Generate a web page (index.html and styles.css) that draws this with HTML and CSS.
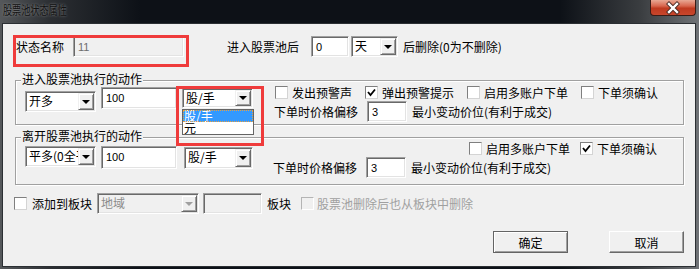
FILE: index.html
```html
<!DOCTYPE html>
<html lang="zh-CN">
<head>
    <meta charset="UTF-8">
    <title>股票池状态属性</title>
    <link rel="stylesheet" href="styles.css">
</head>
<body>
    <div class="window">
        <div class="titlebar">
            <span class="title">股票池状态属性</span>
            <span class="close">
                <svg width="44" height="14" viewBox="0 0 44 14">
                    <path d="M18 3 L26 11 M26 3 L18 11" stroke="#4a2a24" stroke-width="4.2" stroke-linecap="square"/>
                    <path d="M18 3 L26 11 M26 3 L18 11" stroke="#fff" stroke-width="2.4" stroke-linecap="square"/>
                </svg>
            </span>
        </div>

        <div class="client">
            <div class="row row-name">
                <span class="name-lbl">状态名称</span>
                <span class="edit edit-name disabled">11</span>
                <span class="enter-lbl">进入股票池后</span>
                <span class="edit edit-days">0</span>
                <span class="combo combo-days">
                    <span class="combo-text">天</span>
                    <span class="combo-btn"></span>
                </span>
                <span>后删除(0为不删除)</span>
            </div>

            <div class="group group-enter">
                <div class="group-title">进入股票池执行的动作</div>
                <div class="group-body">
                    <div class="combo combo-action">
                        <span class="combo-text">开多</span>
                        <span class="combo-btn"></span>
                    </div>
                    <div class="edit edit-qty">100</div>
                    <div class="combo combo-unit">
                        <span class="combo-text">股/手</span>
                        <span class="combo-btn"></span>
                        <div class="droplist">
                            <div class="drop-item selected">股/手</div>
                            <div class="drop-item">元</div>
                        </div>
                    </div>
                    <div class="opts">
                        <div class="opt-row checks">
                            <label class="check"><span class="cb"></span>发出预警声</label>
                            <label class="check"><span class="cb checked"><svg viewBox="0 0 11 11"><polyline points="2,5 4.5,8 9,2.5"/></svg></span>弹出预警提示</label>
                            <label class="check"><span class="cb"></span>启用多账户下单</label>
                            <label class="check"><span class="cb"></span>下单须确认</label>
                        </div>
                        <div class="opt-row offset-row">
                            <span class="offset-lbl">下单时价格偏移</span>
                            <span class="edit edit-offset">3</span>
                            <span>最小变动价位(有利于成交)</span>
                        </div>
                    </div>
                </div>
            </div>

            <div class="group group-leave">
                <div class="group-title">离开股票池执行的动作</div>
                <div class="group-body">
                    <div class="combo combo-action">
                        <span class="combo-text">平多(0全平)</span>
                        <span class="combo-btn"></span>
                    </div>
                    <div class="edit edit-qty">100</div>
                    <div class="combo combo-unit">
                        <span class="combo-text">股/手</span>
                        <span class="combo-btn"></span>
                    </div>
                    <div class="opts">
                        <div class="opt-row checks">
                            <label class="check"><span class="cb"></span>启用多账户下单</label>
                            <label class="check"><span class="cb checked"><svg viewBox="0 0 11 11"><polyline points="2,5 4.5,8 9,2.5"/></svg></span>下单须确认</label>
                        </div>
                        <div class="opt-row offset-row">
                            <span class="offset-lbl">下单时价格偏移</span>
                            <span class="edit edit-offset">3</span>
                            <span>最小变动价位(有利于成交)</span>
                        </div>
                    </div>
                </div>
            </div>

            <div class="row row-block">
                <label class="check"><span class="cb"></span>添加到板块</label>
                <span class="combo combo-block disabled">
                    <span class="combo-text">地域</span>
                    <span class="combo-btn"></span>
                </span>
                <span class="edit edit-block disabled"></span>
                <span class="block-lbl">板块</span>
                <label class="check disabled"><span class="cb"></span>股票池删除后也从板块中删除</label>
            </div>

            <div class="row row-buttons">
                <button class="btn default">确定</button>
                <button class="btn">取消</button>
            </div>

            <div class="mark mark-name"></div>
            <div class="mark mark-unit"></div>
        </div>
    </div>
</body>
</html>
```

FILE: styles.css
```css
body {
    margin: 0;
    background-color: #3b3e41;
    font-family: "Noto Sans CJK SC", sans-serif;
    font-size: 12px;
    color: #000;
    overflow: hidden;
}

.window {
    width: 699px;
    height: 269px;
    background: linear-gradient(to right, #55585b 0, #2c2f33 50px, #0d1117 140px, #0d1117 560px, #3a3d40 640px, #6f7276 699px);
}

.titlebar {
    height: 23px;
    display: flex;
    justify-content: space-between;
    align-items: flex-start;
}

.title {
    display: inline-block;
    margin: 3px 0 0 3px;
    font-size: 12px;
    line-height: 14px;
    color: #111;
    transform: scaleX(0.76);
    transform-origin: 0 0;
    text-shadow: 0 0 3px rgba(170, 170, 170, 0.8);
}

.close {
    width: 46px;
    height: 16px;
    margin-right: 3px;
    box-sizing: border-box;
    border: 1px solid #3a1c16;
    border-top: none;
    border-radius: 0 0 4px 4px;
    background: linear-gradient(#e8a894 0%, #d8664e 40%, #bf3a20 55%, #c8462c 100%);
    display: flex;
    justify-content: center;
    align-items: center;
}

.close svg {
    display: block;
}

.client {
    position: relative;
    margin-left: 2px;
    width: 694px;
    height: 244px;
    box-sizing: border-box;
    border: 1px solid #2b2f33;
    background-color: #f0f0f0;
    white-space: nowrap;
}

.row {
    display: flex;
    align-items: center;
    height: 21px;
}

.row-name {
    margin-top: 12px;
    padding-left: 13px;
}

.name-lbl {
    margin-right: 9px;
}

.enter-lbl {
    margin-right: 12px;
}

/* sunken edit box */
.edit {
    display: block;
    box-sizing: border-box;
    border: 1px solid;
    border-color: #a0a0a0 #fff #fff #a0a0a0;
    box-shadow: inset 1px 1px 0 #696969, inset -1px -1px 0 #e3e3e3;
    background-color: #fff;
    font-family: "Liberation Sans", Arial, sans-serif;
    font-size: 11px;
    line-height: 12px;
    padding: 4px 3px 0 4px;
    color: #000;
}

.edit.disabled {
    background-color: #f0f0f0;
    color: #6d6d6d;
}

.edit-name {
    width: 111px;
    height: 21px;
    margin-right: 43px;
}

.edit-days {
    width: 38px;
    height: 21px;
    margin-right: 2px;
}

/* combo box */
.combo {
    position: relative;
    display: flex;
    box-sizing: border-box;
    border: 1px solid;
    border-color: #a0a0a0 #fff #fff #a0a0a0;
    box-shadow: inset 1px 1px 0 #696969, inset -1px -1px 0 #e3e3e3;
    padding: 1px;
    background-color: #fff;
}

.combo-text {
    flex: 1;
    overflow: hidden;
    padding-left: 2px;
    line-height: 16px;
}

.combo-btn {
    position: relative;
    width: 16px;
    flex: none;
    box-sizing: border-box;
    background-color: #f0f0f0;
    border: 1px solid;
    border-color: #f0f0f0 #696969 #696969 #f0f0f0;
    box-shadow: inset 1px 1px 0 #fff, inset -1px -1px 0 #a0a0a0;
}

.combo-btn::after {
    content: "";
    position: absolute;
    left: 50%;
    top: 50%;
    margin: -2px 0 0 -4px;
    border-left: 4px solid transparent;
    border-right: 4px solid transparent;
    border-top: 4px solid #000;
}

.combo.disabled {
    background-color: #f0f0f0;
    color: #8c8c8c;
}

.combo.disabled .combo-btn::after {
    border-top-color: #a0a0a0;
}

.combo-days {
    width: 47px;
    height: 21px;
    margin-right: 5px;
}

/* group boxes */
.group {
    margin-left: 12px;
    width: 669px;
    box-sizing: border-box;
    border: 1px solid #a0a0a0;
    box-shadow: 1px 1px 0 #fff, inset 1px 1px 0 #fff;
}

.group-enter {
    margin-top: 23px;
    height: 45px;
}

.group-leave {
    margin-top: 12px;
    height: 48px;
}

.group-title {
    width: fit-content;
    margin: -9px 0 0 5px;
    padding: 0 1px;
    height: 14px;
    line-height: 14px;
    background-color: #f0f0f0;
}

.group-body {
    display: flex;
    align-items: flex-start;
    padding-left: 9px;
}

.combo-action {
    width: 71px;
    height: 21px;
    margin-right: 5px;
}

.edit-qty {
    width: 76px;
    margin-right: 5px;
}

.combo-unit {
    width: 71px;
    height: 20px;
    margin-right: 22px;
}

.group-enter .combo-action { margin-top: 5px; }
.group-enter .edit-qty { margin-top: 1px; height: 22px; }
.group-enter .combo-unit { margin-top: 2px; }

.group-leave .combo-action { margin-top: 3px; }
.group-leave .edit-qty { margin-top: 3px; height: 23px; margin-right: 7px; }
.group-leave .combo-unit { margin-top: 4px; width: 69px; height: 22px; margin-right: 21px; }
.group-leave .opts { margin-top: -1px; }
.group-leave .checks { margin-left: 195px; gap: 10px; }

.droplist {
    position: absolute;
    left: -1px;
    top: 20px;
    width: 72px;
    box-sizing: border-box;
    border: 1px solid #646464;
    background-color: #fff;
    z-index: 2;
}

.drop-item {
    height: 12px;
    line-height: 12px;
    padding-left: 1px;
}

.drop-item.selected {
    background-color: #3399ff;
    color: #fff;
    outline: 1px dotted #e8a040;
    outline-offset: -1px;
}

.opt-row {
    display: flex;
    align-items: center;
}

.checks {
    height: 13px;
    gap: 13px;
}

.offset-row {
    margin-top: 2px;
    height: 21px;
}

.offset-lbl {
    margin-left: -1px;
    margin-right: 9px;
}

.edit-offset {
    width: 40px;
    height: 21px;
    margin-right: 5px;
}

/* checkboxes */
.check {
    display: flex;
    align-items: center;
    gap: 4px;
}

.cb {
    width: 13px;
    height: 13px;
    box-sizing: border-box;
    border: 1px solid;
    border-color: #7f7f7f #d4d4d4 #d4d4d4 #7f7f7f;
    background-color: #fff;
    display: flex;
    align-items: center;
    justify-content: center;
}

.cb svg {
    width: 11px;
    height: 11px;
}

.cb polyline {
    fill: none;
    stroke: #000;
    stroke-width: 1.8;
}

.check.disabled {
    color: #a0a0a0;
    gap: 3px;
}

.check.disabled .cb {
    background-color: #f0f0f0;
    border-color: #b4b4b4 #fff #fff #b4b4b4;
}

.row-block {
    margin-top: 8px;
    padding-left: 11px;
}

.row-block > .check:first-child {
    gap: 5px;
    margin-right: 5px;
}

.combo-block {
    width: 102px;
    height: 21px;
    margin-right: 4px;
}

.edit-block {
    width: 59px;
    height: 21px;
    margin-right: 5px;
}

.block-lbl {
    margin-right: 10px;
}

/* buttons */
.row-buttons {
    margin-top: 17px;
    height: 22px;
    justify-content: flex-end;
    gap: 41px;
    padding-right: 11px;
}

.btn {
    width: 75px;
    height: 22px;
    padding: 0;
    font-family: inherit;
    font-size: 12px;
    color: #000;
    background-color: #f0f0f0;
    border: 1px solid;
    border-color: #fff #696969 #696969 #fff;
    box-shadow: inset -1px -1px 0 #a0a0a0;
}

.btn.default {
    border-color: #646464;
    box-shadow: inset 1px 1px 0 #fff, inset -1px -1px 0 #a0a0a0;
}

/* red annotation frames */
.mark {
    position: absolute;
    box-sizing: border-box;
    border: 3px solid #ef3b3b;
}

.mark-name {
    left: 10px;
    top: 11px;
    width: 176px;
    height: 32px;
}

.mark-unit {
    left: 173px;
    top: 62px;
    width: 88px;
    height: 60px;
}
```
